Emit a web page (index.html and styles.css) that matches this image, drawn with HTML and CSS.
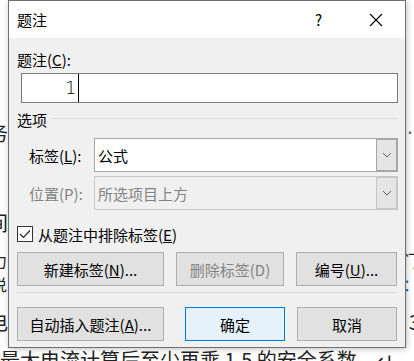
FILE: index.html
```html
<!DOCTYPE html>
<html>
<head>
    <title>题注</title>
    <link rel="stylesheet" href="styles.css">
</head>
<body>
    <div class="doc">
        <div class="doc-row r1"><span class="cut">务</span><span class="tail dot">·</span></div>
        <div class="doc-row r2"><span class="cut">间</span></div>
        <div class="doc-row r3 small"><span class="cut">力</span><span class="tail">门</span></div>
        <div class="doc-row r4 small"><span class="cut">说</span><span class="tail blue">：</span></div>
        <div class="doc-row r5"><span class="cut">电</span><span class="tail">3</span></div>
        <div class="doc-last">最大电流计算后至少再乘 1.5 的安全系数。↵</div>
    </div>

    <div class="dialog">
        <div class="titlebar">
            <span class="title">题注</span>
            <span class="help">?</span>
            <svg class="close" width="14" height="14" viewBox="0 0 14 14">
                <path d="M1 1 L13 13 M13 1 L1 13" stroke="#000" stroke-width="1.1" fill="none"/>
            </svg>
        </div>

        <div class="content">
            <div class="label">题注(<u>C</u>):</div>
            <div class="caption-box">
                <span class="num">1</span><span class="caret"></span>
            </div>

            <div class="group">
                <span class="group-title">选项</span>
                <span class="group-line"></span>
            </div>

            <div class="field-row first">
                <span class="field-label">标签(<u>L</u>):</span>
                <div class="combo">
                    <span class="combo-text">公式</span>
                    <span class="combo-btn">
                        <svg width="10" height="6" viewBox="0 0 10 6"><path d="M1 1 L5 5 L9 1" stroke="#606060" stroke-width="1" fill="none"/></svg>
                    </span>
                </div>
            </div>

            <div class="field-row disabled">
                <span class="field-label">位置(P):</span>
                <div class="combo">
                    <span class="combo-text">所选项目上方</span>
                    <span class="combo-btn">
                        <svg width="10" height="6" viewBox="0 0 10 6"><path d="M1 1 L5 5 L9 1" stroke="#606060" stroke-width="1" fill="none"/></svg>
                    </span>
                </div>
            </div>

            <div class="check-row">
                <span class="checkbox">
                    <svg width="12" height="10" viewBox="0 0 12 10"><path d="M1 5 L4.5 8.5 L11 1.5" stroke="#222" stroke-width="1.2" fill="none"/></svg>
                </span>
                <span>从题注中排除标签(<u>E</u>)</span>
            </div>

            <div class="btn-row top">
                <button class="btn w147">新建标签(<u>N</u>)...</button>
                <button class="btn w108 off">删除标签(D)</button>
                <button class="btn w101">编号(<u>U</u>)...</button>
            </div>

            <div class="separator"></div>

            <div class="btn-row bottom">
                <button class="btn w147">自动插入题注(<u>A</u>)...</button>
                <button class="btn w100 ok">确定</button>
                <button class="btn w100 cancel">取消</button>
            </div>
        </div>
    </div>
</body>
</html>
```

FILE: styles.css
```css
body {
    margin: 0;
    width: 414px;
    height: 361px;
    overflow: hidden;
    position: relative;
    background: #fff;
    font-family: "Noto Sans CJK SC", "Noto Sans", sans-serif;
}

/* document behind the dialog */
.doc { color: #222; font-size: 20px; line-height: 20px; }
.doc-row { display: flex; justify-content: space-between; height: 20px; overflow: hidden; }
.doc-row .cut { margin-left: -12px; }
.doc-row .tail { margin-right: -6px; }
.doc-row .blue { color: #2b5fc9; }
.doc-row .dot { font-size: 12px; color: #666; margin-right: -2px; }
.doc-row.small { font-size: 16px; }
.doc-row.small .cut { margin-left: -9px; }
.doc-row.small .tail { margin-right: -5px; }
.r1 { margin-top: 123px; }
.r2 { margin-top: 70px; }
.r3 { margin-top: 17px; }
.r4 { margin-top: 4px; }
.r5 { margin-top: 18px; }
.doc-last { margin-top: 17px; line-height: 22px; white-space: nowrap; }

/* dialog */
.dialog {
    position: absolute;
    left: 8px;
    top: 0;
    width: 398px;
    height: 348px;
    box-sizing: border-box;
    border: 1px solid #6f6f6f;
    background: #f0f0f0;
    box-shadow: 1px 1px 6px rgba(0, 0, 0, 0.25);
    font-size: 15px;
    color: #000;
}

.titlebar {
    height: 37px;
    background: #fff;
    display: flex;
    align-items: center;
    padding: 0 22px 0 8px;
}
.title { font-size: 15px; }
.help { margin-left: auto; width: 8px; font-size: 15px; }
.close { margin-left: 46px; }

.content { padding: 0 7px 0 8px; }

.label { margin-top: 12px; line-height: 20px; }

.caption-box {
    margin: 3px 0 0 4px;
    height: 30px;
    box-sizing: border-box;
    border: 1px solid #7a7a7a;
    background: #fff;
    display: flex;
    align-items: center;
    padding-left: 43px;
}
.num { font-family: "DejaVu Sans", sans-serif; font-weight: 200; font-size: 18px; line-height: 1; }
.caret { width: 1px; height: 28px; background: #000; margin-left: 2px; }

.group { margin-top: 7px; display: flex; line-height: 20px; }
.group-line { flex: 1; height: 1px; background: #dcdcdc; margin: 8px 0 0 5px; }

.field-row { display: flex; align-items: center; height: 34px; }
.field-row.first { margin-top: 8px; }
.field-row.disabled { margin-top: 4px; color: #838383; }
.field-label { width: 77px; padding-left: 12px; box-sizing: border-box; }

.combo {
    flex: 1;
    height: 34px;
    box-sizing: border-box;
    border: 1px solid #a6a6a6;
    background: #fff;
    display: flex;
    align-items: center;
}
.disabled .combo { background: #f0f0f0; border-color: #c6c6c6; }
.combo-text { flex: 1; padding-left: 3px; }
.combo-btn {
    width: 21px;
    align-self: stretch;
    background: #e5e5e5;
    box-shadow: inset 0 0 0 1px #a6a6a6;
    display: flex;
    align-items: center;
    justify-content: center;
}
.disabled .combo-btn { box-shadow: inset 0 0 0 1px #c6c6c6; }

.check-row { margin-top: 14px; height: 20px; display: flex; align-items: center; }
.checkbox {
    width: 16px;
    height: 16px;
    box-sizing: border-box;
    border: 1px solid #333;
    background: #fff;
    display: flex;
    align-items: center;
    justify-content: center;
    margin-right: 5px;
}

.btn-row { display: flex; }
.btn-row.top { margin-top: 8px; }
.btn-row.bottom { margin-top: 14px; }

.btn {
    height: 34px;
    box-sizing: border-box;
    border: 1px solid #adadad;
    background: #e1e1e1;
    font-family: inherit;
    font-size: 15px;
    color: #000;
    padding: 0;
    margin: 0 12px 0 0;
}
.btn:last-child { margin-right: 0; }
.btn.off { color: #838383; }
.btn.ok { background: #e5f1fb; border-color: #0078d7; margin-right: 12px; }
.btn-row.bottom .btn:first-child { margin-right: 21px; }
.w147 { width: 147px; }
.w108 { width: 108px; }
.w101 { width: 101px; }
.w100 { width: 100px; }

.separator { margin-top: 6px; height: 1px; background: #dadada; }
```
